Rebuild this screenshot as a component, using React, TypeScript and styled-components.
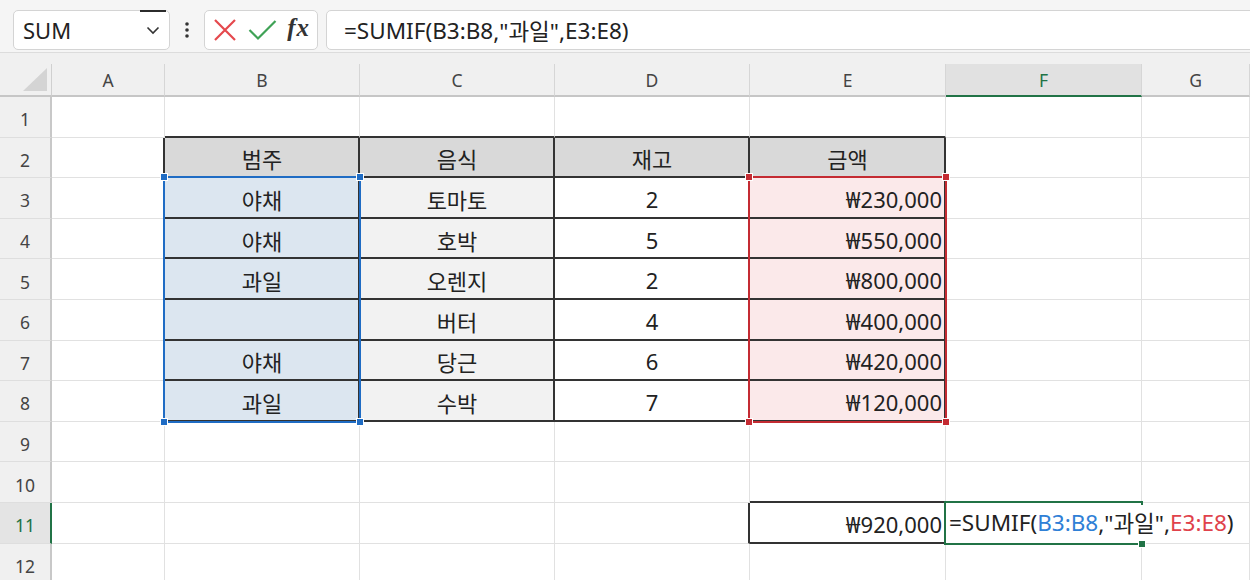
import React from "react";
import styled, { createGlobalStyle } from "styled-components";

const GlobalStyle = createGlobalStyle`
  html, body {
    margin: 0;
    padding: 0;
    background: #fff;
  }
  body {
    font-family: "Noto Sans", "Noto Sans CJK KR", sans-serif;
    overflow: hidden;
  }
  * {
    box-sizing: border-box;
  }
`;

const GREEN = "#217346";
const DARK = "#333";
const GRID = "#e1e1e1";

const Root = styled.div`
  width: 1250px;
  height: 580px;
  overflow: hidden;
  display: flex;
  flex-direction: column;
  background: #fff;
`;

const TopBar = styled.div`
  height: 53px;
  flex: none;
  display: flex;
  align-items: stretch;
  padding: 10px 0 2px 13px;
  background: #f5f5f5;
  border-bottom: 1px solid #dcdcdc;
`;

const Box = styled.div`
  background: #fff;
  border: 1px solid #d4d4d4;
  border-radius: 5px;
  display: flex;
  align-items: center;
`;

const NameBox = styled(Box)`
  width: 157px;
  padding-left: 9px;
  font-size: 22px;
  color: #222;
`;

const ChevronButton = styled.div`
  margin-left: auto;
  width: 26px;
  height: calc(100% + 1px);
  margin-top: -2px;
  margin-right: 3px;
  border-top: 2px solid #2b2b2b;
  display: flex;
  align-items: center;
  justify-content: center;
`;

const Dots = styled.div`
  width: 34px;
  display: flex;
  align-items: center;
  justify-content: center;
`;

const FxBox = styled(Box)`
  width: 114px;
  padding: 0 7px 0 8px;
  justify-content: space-between;
`;

const FxText = styled.span`
  font-family: "Liberation Serif", "DejaVu Serif", serif;
  font-style: italic;
  font-weight: bold;
  font-size: 25px;
  letter-spacing: 1px;
  color: #333;
  margin-top: -4px;
`;

const FormulaBox = styled(Box)`
  flex: 1;
  margin-left: 8px;
  margin-right: -8px;
  padding-left: 17px;
  font-size: 22.5px;
  color: #222;
`;

const HeaderBand = styled.div`
  height: 11px;
  flex: none;
  background: #f0f0f0;
`;

const Sheet = styled.div`
  display: grid;
  grid-template-columns: 52px 113px 195px 195px 195px 196px 196px 1fr;
  grid-template-rows: 33px repeat(12, 40.6px);
  position: relative;
`;

type Place = { $gc: number; $gr: number };

const Corner = styled.div`
  grid-column: 1;
  grid-row: 1;
  background: #f0f0f0;
  border-right: 1px solid #d0d0d0;
  border-bottom: 2px solid #c6c6c6;
  display: flex;
  align-items: flex-end;
  justify-content: flex-end;
  padding: 0 4px 4px 0;
`;

const ColHeader = styled.div<Place & { $active?: boolean }>`
  grid-column: ${(p) => p.$gc};
  grid-row: ${(p) => p.$gr};
  background: ${(p) => (p.$active ? "#e1e1e1" : "#f0f0f0")};
  border-right: 1px solid #d6d6d6;
  border-bottom: 2px solid ${(p) => (p.$active ? GREEN : "#c6c6c6")};
  display: flex;
  align-items: center;
  justify-content: center;
  font-size: 17.5px;
  color: ${(p) => (p.$active ? GREEN : "#444")};
`;

const RowHeader = styled.div<Place & { $active?: boolean }>`
  grid-column: ${(p) => p.$gc};
  grid-row: ${(p) => p.$gr};
  background: ${(p) => (p.$active ? "#e4e4e4" : "#f0f0f0")};
  border-right: 2px solid ${(p) => (p.$active ? GREEN : "#c8c8c8")};
  border-bottom: 1px solid #dedede;
  display: flex;
  align-items: center;
  justify-content: center;
  padding-top: 5px;
  font-size: 17.5px;
  color: ${(p) => (p.$active ? GREEN : "#444")};
`;

const Cell = styled.div<
  Place & {
    $fill: string;
    $right: string;
    $bottom: string;
    $align: "center" | "flex-end" | "flex-start";
  }
>`
  grid-column: ${(p) => p.$gc};
  grid-row: ${(p) => p.$gr};
  background: ${(p) => p.$fill};
  border-right: ${(p) => (p.$right === DARK ? "2px" : "1px")} solid
    ${(p) => p.$right};
  border-bottom: ${(p) => (p.$bottom === DARK ? "2px" : "1px")} solid
    ${(p) => p.$bottom};
  display: flex;
  align-items: center;
  justify-content: ${(p) => p.$align};
  padding: 3px 2px 0 3px;
  font-size: 22px;
  color: #222;
  white-space: nowrap;
  overflow: visible;
`;

const RangeBox = styled.div<{ $color: string; $col: number; $row: number; $span: number }>`
  grid-column: ${(p) => p.$col};
  grid-row: ${(p) => p.$row} / span ${(p) => p.$span};
  margin: -2px -1px -1px -2px;
  border: 2px solid ${(p) => p.$color};
  position: relative;
  z-index: 3;
  pointer-events: none;
`;

const Handle = styled.span<{ $color: string; $x: "left" | "right"; $y: "top" | "bottom" }>`
  position: absolute;
  width: 8px;
  height: 8px;
  background: ${(p) => p.$color};
  border: 1px solid #fff;
  ${(p) => p.$x}: -5px;
  ${(p) => p.$y}: -5px;
`;

const EditText = styled.span`
  position: relative;
  z-index: 4;
  align-self: stretch;
  margin: -1px 0 3px 0;
  padding: 0 2px 0 0;
  background: #fff;
  display: inline-flex;
  align-items: center;
  font-size: 22.5px;
`;

const Ref = styled.span<{ $color: string }>`
  color: ${(p) => p.$color};
`;

const COLS = ["A", "B", "C", "D", "E", "F", "G"];

const DATA: Record<string, string> = {
  B2: "범주",
  C2: "음식",
  D2: "재고",
  E2: "금액",
  B3: "야채",
  C3: "토마토",
  D3: "2",
  E3: "₩230,000",
  B4: "야채",
  C4: "호박",
  D4: "5",
  E4: "₩550,000",
  B5: "과일",
  C5: "오렌지",
  D5: "2",
  E5: "₩800,000",
  C6: "버터",
  D6: "4",
  E6: "₩400,000",
  B7: "야채",
  C7: "당근",
  D7: "6",
  E7: "₩420,000",
  B8: "과일",
  C8: "수박",
  D8: "7",
  E8: "₩120,000",
  E11: "₩920,000",
};

const cellLook = (c: number, r: number) => {
  const inTable = c >= 1 && c <= 4 && r >= 2 && r <= 8;
  const right =
    inTable || (c === 0 && r >= 2 && r <= 8) || (r === 11 && (c === 3 || c === 4))
      ? DARK
      : GRID;
  const bottom =
    inTable || (r === 1 && c >= 1 && c <= 4) || (c === 4 && (r === 10 || r === 11))
      ? DARK
      : GRID;
  let fill = "#fff";
  if (inTable && r === 2) fill = "#d9d9d9";
  else if (inTable && c === 1) fill = "#dce6f0";
  else if (inTable && c === 2) fill = "#f2f2f2";
  else if (inTable && c === 4) fill = "#fbe9ea";
  const align: "center" | "flex-end" | "flex-start" =
    c === 4 && r !== 2 ? "flex-end" : c === 5 ? "flex-start" : "center";
  return { right, bottom, fill, align };
};

const CornerTriangle = () => (
  <svg width="24" height="23" viewBox="0 0 24 23">
    <polygon points="24,0 24,23 0,23" fill="#d4d4d4" />
  </svg>
);

const Chevron = () => (
  <svg width="14" height="9" viewBox="0 0 14 9">
    <polyline points="1.5,1.5 7,7 12.5,1.5" fill="none" stroke="#333" strokeWidth="1.6" />
  </svg>
);

const VDots = () => (
  <svg width="6" height="18" viewBox="0 0 6 18">
    <circle cx="3" cy="3" r="1.8" fill="#333" />
    <circle cx="3" cy="9" r="1.8" fill="#333" />
    <circle cx="3" cy="15" r="1.8" fill="#333" />
  </svg>
);

const CancelIcon = () => (
  <svg width="24" height="24" viewBox="0 0 24 24">
    <path d="M2 2 L22 22 M22 2 L2 22" stroke="#e5484d" strokeWidth="2.2" fill="none" />
  </svg>
);

const EnterIcon = () => (
  <svg width="29" height="22" viewBox="0 0 29 22">
    <path d="M1.5 11 L10 19.5 L27.5 2" stroke="#3fa256" strokeWidth="2.2" fill="none" />
  </svg>
);

const Formula = ({ colored }: { colored?: boolean }) => (
  <>
    =SUMIF(
    <Ref $color={colored ? "#2f80d6" : "inherit"}>B3:B8</Ref>
    ,"과일",
    <Ref $color={colored ? "#e0424b" : "inherit"}>E3:E8</Ref>)
  </>
);

export default function App() {
  const rows = Array.from({ length: 12 }, (_, i) => i + 1);
  return (
    <Root>
      <GlobalStyle />
      <TopBar>
        <NameBox>
          SUM
          <ChevronButton>
            <Chevron />
          </ChevronButton>
        </NameBox>
        <Dots>
          <VDots />
        </Dots>
        <FxBox>
          <CancelIcon />
          <EnterIcon />
          <FxText>fx</FxText>
        </FxBox>
        <FormulaBox>
          <Formula />
        </FormulaBox>
      </TopBar>
      <HeaderBand />
      <Sheet>
        <Corner>
          <CornerTriangle />
        </Corner>
        {COLS.map((c, ci) => (
          <ColHeader key={c} $gc={ci + 2} $gr={1} $active={c === "F"}>
            {c}
          </ColHeader>
        ))}
        {rows.map((r) => (
          <React.Fragment key={r}>
            <RowHeader $gc={1} $gr={r + 1} $active={r === 11}>
              {r}
            </RowHeader>
            {COLS.map((c, ci) => {
              const look = cellLook(ci, r);
              const id = `${c}${r}`;
              return (
                <Cell
                  key={id}
                  $gc={ci + 2}
                  $gr={r + 1}
                  $fill={look.fill}
                  $right={look.right}
                  $bottom={look.bottom}
                  $align={look.align}
                >
                  {id === "F11" ? (
                    <EditText>
                      <Formula colored />
                    </EditText>
                  ) : (
                    DATA[id] ?? ""
                  )}
                </Cell>
              );
            })}
          </React.Fragment>
        ))}
        <RangeBox $color="#1f6cc4" $col={3} $row={4} $span={6}>
          <Handle $color="#1f6cc4" $x="left" $y="top" />
          <Handle $color="#1f6cc4" $x="right" $y="top" />
          <Handle $color="#1f6cc4" $x="left" $y="bottom" />
          <Handle $color="#1f6cc4" $x="right" $y="bottom" />
        </RangeBox>
        <RangeBox $color="#c42b32" $col={6} $row={4} $span={6}>
          <Handle $color="#c42b32" $x="left" $y="top" />
          <Handle $color="#c42b32" $x="right" $y="top" />
          <Handle $color="#c42b32" $x="left" $y="bottom" />
          <Handle $color="#c42b32" $x="right" $y="bottom" />
        </RangeBox>
        <RangeBox $color={GREEN} $col={7} $row={12} $span={1}>
          <Handle $color={GREEN} $x="right" $y="bottom" />
        </RangeBox>
      </Sheet>
    </Root>
  );
}
